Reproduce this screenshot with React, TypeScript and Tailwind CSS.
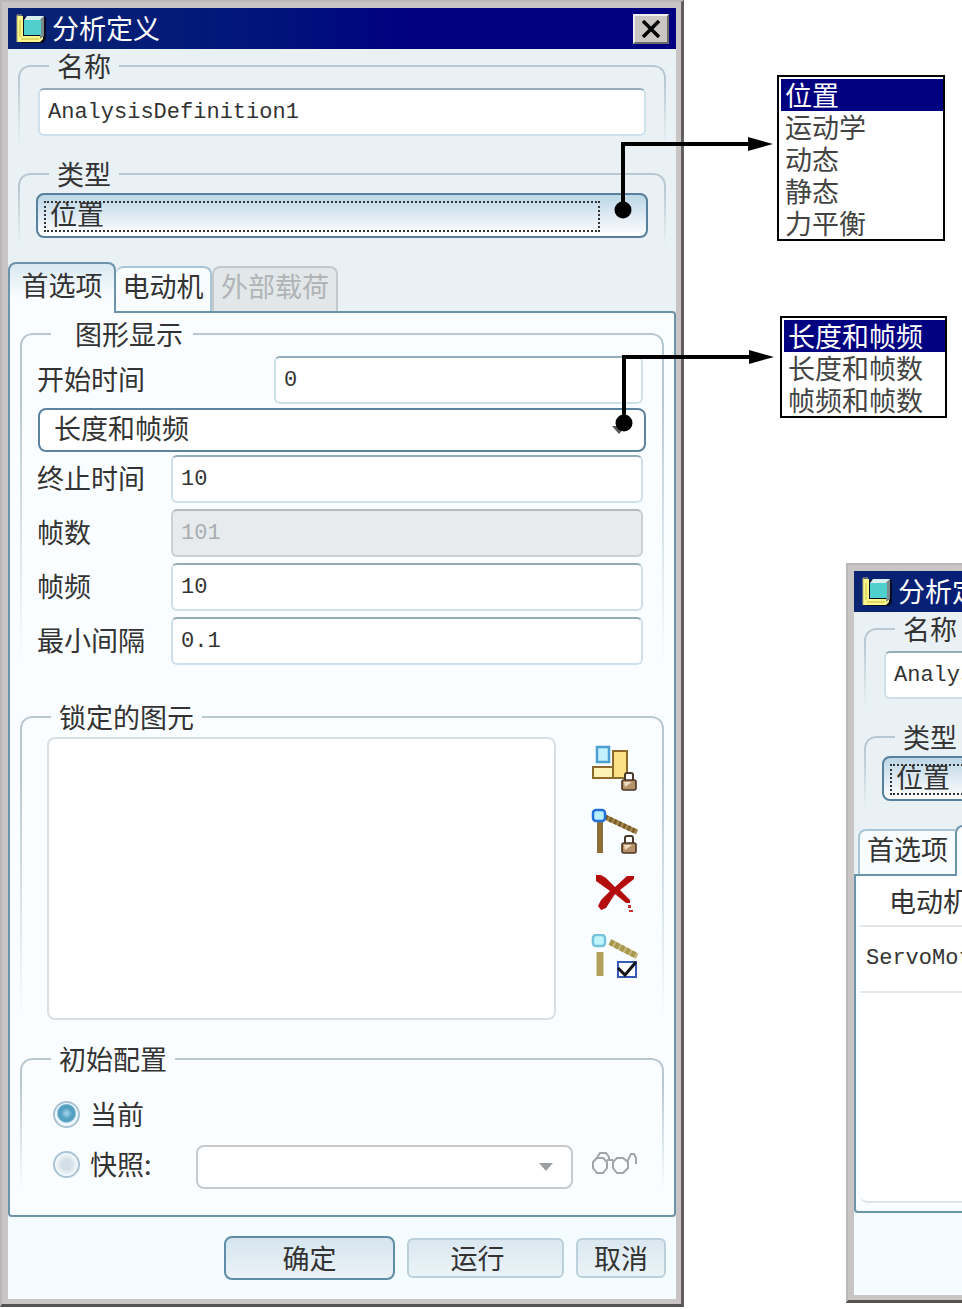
import { useState } from "react";
import type { ReactNode } from "react";
import clsx from "clsx";

const TYPES = ["位置", "运动学", "动态", "静态", "力平衡"];
const FRAME_MODES = ["长度和帧频", "长度和帧数", "帧频和帧数"];

const inputClass =
    "h-12 w-full min-w-0 rounded-md border-2 border-[#cde0ec] border-t-[#94abb8] bg-white font-['Liberation_Mono',monospace] text-[22px] text-[#333] outline-none disabled:border-[#ccd0d1] disabled:border-t-[#b4b9bb] disabled:bg-[#e7ebed] disabled:text-[#a9adaf]";

const AppIcon = () => (
    <svg width="30" height="30" viewBox="0 0 30 30" className="shrink-0" aria-hidden="true">
        <path d="M5 3h25v23l-3 3H5z" fill="#0a0a20" />
        <path d="M1 2h6v20h20v3l-3 3H1z" fill="#fbf78a" />
        <path d="M1 28V1h5" fill="none" stroke="#b9b47a" strokeWidth="1" />
        <path d="M24 6l4-4v20l-4 3z" fill="#7d8a8a" />
        <path d="M8 6l3-4h17l-4 4z" fill="#d8efef" />
        <rect x="8" y="6" width="17" height="15" fill="#4fd0cc" />
        <path d="M5 25h18M4 23V6" stroke="#d6cf5a" strokeWidth="1.5" fill="none" />
    </svg>
);

const PadLock = ({ y }: { y: number }) => (
    <g transform={`translate(30 ${y})`}>
        <path d="M4 8V3q0-2 2-2h4q2 0 2 2v5" fill="#fff" stroke="#4a3a2c" strokeWidth="2" />
        <rect x="1" y="8" width="14" height="10" rx="2" fill="#b5926a" stroke="#4a3222" strokeWidth="1.6" />
        <path d="M3 10h8l-7 5z" fill="#f0dcc0" />
    </g>
);

const LockBodyIcon = () => (
    <svg width="47" height="46" viewBox="0 0 47 46" aria-hidden="true">
        <rect x="2" y="22" width="21" height="11" fill="#fdf3b4" stroke="#8d6a2c" strokeWidth="2" />
        <rect x="22" y="6" width="14" height="27" fill="#fbe184" stroke="#8d6a2c" strokeWidth="2" />
        <rect x="6" y="2" width="12" height="15" fill="#c4f1fd" stroke="#4d9fd0" strokeWidth="2.5" />
        <PadLock y={27} />
    </svg>
);

const LockJointIcon = () => (
    <svg width="47" height="46" viewBox="0 0 47 46" aria-hidden="true">
        <path d="M9 14v31" stroke="#8d6e36" strokeWidth="6" />
        <path d="M14 9l32 15" stroke="#a78a52" strokeWidth="5" />
        <path d="M14 9l32 15" stroke="#7d5f2a" strokeWidth="5" strokeDasharray="3 2" />
        <rect x="2" y="2" width="12" height="11" rx="3" fill="#b8efff" stroke="#2270dd" strokeWidth="2.5" />
        <PadLock y={27} />
    </svg>
);

const DeleteIcon = () => (
    <svg width="47" height="46" viewBox="0 0 47 46" aria-hidden="true">
        <path d="M5 4h5l5 3 9 9L36 5h7v3L29 19l10 10v3h-4l-11-9-9 14-5 2-3-4 3-6 9-9L5 10z" fill="#b30d0d" />
        <path d="M37 34h3v3h-3zM38 39h4v2h-4z" fill="#c83434" />
    </svg>
);

const CheckJointIcon = () => (
    <svg width="47" height="46" viewBox="0 0 47 46" aria-hidden="true">
        <path d="M9 18v24" stroke="#b3a25c" strokeWidth="7" />
        <path d="M19 8l27 14" stroke="#c6b880" strokeWidth="6" />
        <path d="M19 8l27 14" stroke="#a8984e" strokeWidth="6" strokeDasharray="4 2" />
        <rect x="2" y="1" width="12" height="11" rx="3" fill="#c0f4fb" stroke="#74c2dc" strokeWidth="2.5" />
        <rect x="27" y="28" width="18" height="15" fill="#fff" stroke="#3557b8" strokeWidth="2" />
        <path d="M27 34l7 7 11-13" fill="none" stroke="#151515" strokeWidth="3" />
    </svg>
);

const GlassesIcon = () => (
    <svg width="46" height="24" viewBox="0 0 46 24" fill="none" stroke="#a4a4a4" strokeWidth="2" aria-hidden="true">
        <path d="M6 7h6l4 4v6l-4 5H6l-4-5v-6z" />
        <path d="M26 7h6l5 4v6l-5 5h-6l-4-5v-6z" />
        <path d="M16 9h6M5 8l4-6h6l3 4v3M36 11l4-8h3l2 4v6" />
    </svg>
);

/* Leader line running from a drop-down to the list it opens */
const Leader = ({ className }: { className: string }) => (
    <svg width="160" height="84" viewBox="0 0 160 84" className={clsx("pointer-events-none absolute z-20", className)} aria-hidden="true">
        <path d="M10 74V8h128" fill="none" stroke="#000" strokeWidth="4" />
        <circle cx="10" cy="74" r="8.5" />
        <path d="M135 1l25 7-25 7z" />
    </svg>
);

interface GroupProps {
    title: string;
    className?: string;
    legendClass?: string;
    children: ReactNode;
}

/* The frame is measured from below the legend, so it is pulled up to the legend's middle */
const Group = ({ title, className, legendClass = "bg-[#e9f1f5] px-2", children }: GroupProps) => (
    <fieldset className={clsx("relative mx-[10px]", className)}>
        <span className="pointer-events-none absolute inset-x-0 -top-[15px] bottom-0 rounded-t-xl border-2 border-b-0 border-[#b7c8d2] [mask-image:linear-gradient(to_bottom,black_20%,transparent)]" />
        <legend className={clsx("relative z-10 ml-[31px] h-7 leading-7", legendClass)}>{title}</legend>
        {children}
    </fieldset>
);

const PickList = ({ label, options, className }: { label: string; options: string[]; className: string }) => (
    <ul
        role="listbox"
        aria-label={label}
        className={clsx("border-2 border-black bg-white pt-[2px] pl-[2px] font-['Liberation_Sans','Noto_Sans_CJK_SC',sans-serif] leading-9", className)}
    >
        {options.map((o, i) => (
            <li
                key={o}
                role="option"
                aria-selected={i === 0}
                className={clsx("h-8 px-1 whitespace-nowrap", i === 0 ? "bg-[#000080] text-white" : "text-[#444]")}
            >
                {o}
            </li>
        ))}
    </ul>
);

interface DialogProps {
    id: string;
    leader?: boolean;
    tabs: ReactNode;
    footer?: ReactNode;
    children: ReactNode;
}

const Dialog = ({ id, leader, tabs, footer, children }: DialogProps) => {
    const [name, setName] = useState("AnalysisDefinition1");

    return (
        <section className="w-full border-t-2 border-r-[3px] border-b-[3px] border-l-2 border-t-[#b9b7b7] border-r-[#625e5e] border-b-[#555252] border-l-[#b9b7b7] bg-[#c9c5c5] pt-[6px] pr-[5px] pb-[5px] pl-[6px]">
            <header className="flex h-[41px] items-center gap-[6px] bg-gradient-to-r from-[#0a2472] to-[#000080] to-60% pr-[7px] pl-2 text-white">
                <AppIcon />
                <h2 className="flex-1 pb-[2px] whitespace-nowrap">分析定义</h2>
                <button
                    type="button"
                    aria-label="关闭"
                    className="flex h-[30px] w-9 items-center justify-center border-2 border-t-[#eee] border-r-[#6d6a6a] border-b-[#6d6a6a] border-l-[#eee] bg-[#c9c6c3]"
                >
                    <svg width="20" height="18" viewBox="0 0 20 18" aria-hidden="true">
                        <path d="M2 1l16 16M18 1L2 17" stroke="#000" strokeWidth="3.5" />
                    </svg>
                </button>
            </header>
            <div className="bg-[#e9f1f5] pt-[3px]">
                <Group title="名称" className="pb-2">
                    <div className="mx-5 mt-2">
                        <input aria-label="名称" className={clsx(inputClass, "px-2")} value={name} onChange={(e) => setName(e.target.value)} />
                    </div>
                </Group>
                <Group title="类型" className="mt-4 pb-2">
                    <div className="relative mx-[18px] mt-[5px]">
                        <select
                            id={`${id}-type`}
                            aria-label="类型"
                            className="block h-[45px] w-full appearance-none rounded-lg border-2 border-[#56809b] bg-gradient-to-b from-[#bcd7e6] via-[#dfeaf3] to-white px-3 pb-1 outline-none"
                        >
                            {TYPES.map((t) => (
                                <option key={t}>{t}</option>
                            ))}
                        </select>
                        <span className="pointer-events-none absolute top-2 right-12 bottom-[6px] left-2 border-2 border-dotted border-[#333]" />
                        {leader && <Leader className="-top-[57px] -right-[125px]" />}
                    </div>
                </Group>
                <div role="tablist" className="mt-4 flex h-[51px] items-start whitespace-nowrap">
                    {tabs}
                </div>
                <div className="-mt-[2px] rounded-tr-sm rounded-b-sm border-2 border-[#6b93a9] bg-[#fafdff]">{children}</div>
            </div>
            <footer className="flex h-[82px] items-center justify-end gap-3 bg-[#f4fcff] pr-[10px]">{footer}</footer>
        </section>
    );
};

interface FieldRowProps {
    label: string;
    id: string;
    value: string;
    wide?: boolean;
    disabled?: boolean;
}

const FieldRow = ({ label, id, value, wide, disabled }: FieldRowProps) => (
    <div className="flex items-center pr-[21px] pl-[17px]">
        <label htmlFor={id} className={clsx("shrink-0 pb-[2px] whitespace-nowrap", wide ? "w-[237px]" : "w-[134px]")}>
            {label}
        </label>
        <input id={id} className={clsx(inputClass, "px-2")} defaultValue={value} disabled={disabled} />
    </div>
);

const radioClass =
    "size-[27px] shrink-0 appearance-none rounded-full border-2 border-[#a9c3d3] bg-[radial-gradient(circle,#d3dfe7_30%,#f3fafd_70%)] outline-none checked:bg-[radial-gradient(circle_at_50%_45%,#a5d8ec_0%,#4f9cc0_35%,#5ba5c6_50%,#eef8fc_58%)]";

const actionClass = "h-10 rounded-md border-2 border-[#bcd0db] bg-gradient-to-b from-[#dbe8f0] to-[#eaf3f7]";

const tabClass = "mt-1 h-[45px] rounded-t-lg border-2 border-b-0 pb-2";
const activeTabClass = "relative z-10 h-full w-[108px] rounded-t-lg border-2 border-b-0 border-[#6b93a9] pb-2";

const App = () => {
    const [start, setStart] = useState("current");

    return (
        <main className="grid grid-cols-[684fr_278fr] overflow-x-hidden bg-white font-['Noto_Sans_CJK_SC',sans-serif] text-[27px] leading-8 text-[#333]">
            <Dialog
                id="main"
                leader
                tabs={
                    <>
                        <button type="button" role="tab" aria-selected="true" className={clsx(activeTabClass, "bg-gradient-to-b from-[#d9e8f1] to-[#fafdff] to-70%")}>
                            首选项
                        </button>
                        <button type="button" role="tab" aria-selected="false" className={clsx(tabClass, "w-24 border-l-0 border-[#a8c6d8] bg-[#f8fcfe]")}>
                            电动机
                        </button>
                        <button type="button" role="tab" aria-selected="false" disabled className={clsx(tabClass, "w-[126px] border-[#c3c9cc] bg-[#e2e7ea] text-[#b0b4b6]")}>
                            外部载荷
                        </button>
                    </>
                }
                footer={
                    <>
                        <button type="button" className="h-11 w-[171px] rounded-lg border-2 border-[#5f8ca6] bg-gradient-to-b from-[#d5e5ef] to-[#ebf2f7]">
                            确定
                        </button>
                        <button type="button" className={clsx(actionClass, "w-[157px] pr-4")}>
                            运行
                        </button>
                        <button type="button" className={clsx(actionClass, "w-[90px]")}>
                            取消
                        </button>
                    </>
                }
            >
                <Group title="图形显示" className="mt-[7px]" legendClass="bg-[#fafdff] pl-6 pr-[10px]">
                    <div className="mt-2">
                        <FieldRow label="开始时间" id="start" value="0" wide />
                    </div>
                    <div className="relative mx-[18px] mt-1 mb-[3px]">
                        <select aria-label="长度和帧频" className="block h-11 w-full appearance-none rounded-lg border-2 border-[#5c83a0] bg-white px-[14px] pb-1 outline-none">
                            {FRAME_MODES.map((m) => (
                                <option key={m}>{m}</option>
                            ))}
                        </select>
                        <span className="pointer-events-none absolute top-[18px] right-5 border-x-7 border-t-8 border-x-transparent border-t-[#555]" />
                        <Leader className="-top-[59px] -right-[128px]" />
                    </div>
                    <div className="flex flex-col gap-[6px]">
                        <FieldRow label="终止时间" id="end" value="10" />
                        <FieldRow label="帧数" id="count" value="101" disabled />
                        <FieldRow label="帧频" id="rate" value="10" />
                        <FieldRow label="最小间隔" id="step" value="0.1" />
                    </div>
                </Group>
                <Group title="锁定的图元" className="mt-[38px]" legendClass="bg-[#fafdff] px-2">
                    <div className="mt-[6px] flex gap-[35px] pr-[26px] pl-[27px]">
                        <div role="listbox" aria-label="锁定的图元" className="h-[283px] flex-1 rounded-lg border-2 border-[#d9dfe2] bg-white" />
                        <div className="flex flex-col gap-[17px] pt-2">
                            <button type="button" aria-label="锁定主体" className="h-[46px]">
                                <LockBodyIcon />
                            </button>
                            <button type="button" aria-label="锁定连接" className="h-[46px]">
                                <LockJointIcon />
                            </button>
                            <button type="button" aria-label="删除" className="h-[46px]">
                                <DeleteIcon />
                            </button>
                            <button type="button" aria-label="启用连接" className="h-[46px]">
                                <CheckJointIcon />
                            </button>
                        </div>
                    </div>
                </Group>
                <Group title="初始配置" className="mt-[25px] mb-[26px]" legendClass="bg-[#fafdff] px-2">
                    <div className="mt-[25px] flex flex-col gap-[15px] pr-[27px] pl-[33px]">
                        <label className="flex h-8 items-center gap-[10px]">
                            <input type="radio" name="start" className={radioClass} checked={start === "current"} onChange={() => setStart("current")} />
                            当前
                        </label>
                        <div className="flex h-11 items-center">
                            <label className="flex w-[143px] shrink-0 items-center gap-[10px] pb-[6px]">
                                <input type="radio" name="start" className={radioClass} checked={start === "snapshot"} onChange={() => setStart("snapshot")} />
                                快照:
                            </label>
                            <div className="relative flex-1">
                                <select aria-label="快照" disabled className="block h-11 w-full appearance-none rounded-lg border-2 border-[#c6cacc] bg-white" />
                                <span className="pointer-events-none absolute top-[18px] right-5 border-x-7 border-t-8 border-x-transparent border-t-[#9b9fa1]" />
                            </div>
                            <button type="button" aria-label="预览快照" className="ml-[18px] pb-2">
                                <GlassesIcon />
                            </button>
                        </div>
                    </div>
                </Group>
            </Dialog>

            <div className="min-w-0 pt-[75px]">
                <PickList label="类型" options={TYPES} className="ml-[93px] w-[168px]" />
                <PickList label="长度和帧频" options={FRAME_MODES} className="mt-[75px] ml-24 w-[167px]" />
                <div className="mt-[145px] ml-[162px] overflow-hidden">
                    <div className="w-[684px]">
                        <Dialog
                            id="motors"
                            tabs={
                                <>
                                    <button type="button" role="tab" aria-selected="false" className={clsx(tabClass, "ml-1 w-[97px] rounded-tr-none border-r-0 border-[#a8c6d8] bg-[#f8fcfe]")}>
                                        首选项
                                    </button>
                                    <button type="button" role="tab" aria-selected="true" className={clsx(activeTabClass, "bg-[#fafdff]")}>
                                        电动机
                                    </button>
                                </>
                            }
                        >
                            <div className="mx-1 mb-2 h-[327px] rounded-b-lg border-b-2 border-[#dfe3e6] bg-white">
                                <table className="w-full text-left">
                                    <thead>
                                        <tr className="h-[50px] border-b-2 border-[#e3e7ea]">
                                            <th className="pl-[29px] font-normal">电动机</th>
                                        </tr>
                                    </thead>
                                    <tbody>
                                        <tr className="h-[66px] border-b-2 border-[#e3e7ea]">
                                            <td className="pl-[6px] font-['Liberation_Mono',monospace] text-[22px]">ServoMotor1</td>
                                        </tr>
                                    </tbody>
                                </table>
                            </div>
                        </Dialog>
                    </div>
                </div>
            </div>
        </main>
    );
};

export default App;
